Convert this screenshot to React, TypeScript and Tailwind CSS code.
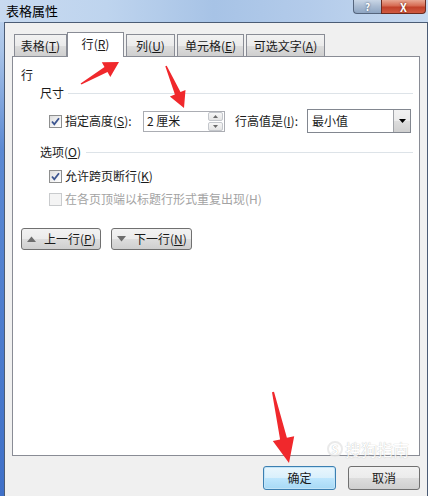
import React from "react";

function arrowPoints(x1: number, y1: number, x2: number, y2: number, headL: number, headW: number, neckW: number, tailW: number) {
  const dx = x2 - x1;
  const dy = y2 - y1;
  const len = Math.hypot(dx, dy);
  const ux = dx / len;
  const uy = dy / len;
  const nx = -uy;
  const ny = ux;
  const bx = x2 - ux * headL;
  const by = y2 - uy * headL;
  const p = (x: number, y: number) => `${x.toFixed(1)},${y.toFixed(1)}`;
  return [
    p(x1 + (nx * tailW) / 2, y1 + (ny * tailW) / 2),
    p(bx + (nx * neckW) / 2, by + (ny * neckW) / 2),
    p(bx + (nx * headW) / 2, by + (ny * headW) / 2),
    p(x2, y2),
    p(bx - (nx * headW) / 2, by - (ny * headW) / 2),
    p(bx - (nx * neckW) / 2, by - (ny * neckW) / 2),
    p(x1 - (nx * tailW) / 2, y1 - (ny * tailW) / 2),
  ].join(" ");
}

function CheckBox({ checked, disabled }: { checked?: boolean; disabled?: boolean }) {
  return (
    <div
      className={
        disabled
          ? "w-[13px] h-[13px] border border-[#c9cbcd] bg-[#f4f4f4] shrink-0"
          : "w-[13px] h-[13px] border border-[#8e8f8f] bg-[linear-gradient(135deg,#dcdcdc_0%,#f4f4f4_60%,#ffffff_100%)] shrink-0 flex items-center justify-center"
      }
    >
      {checked && (
        <svg width="11" height="11" viewBox="0 0 11 11">
          <path d="M2 5.5 L4.3 8.3 L9 2.2" fill="none" stroke="#3c5590" strokeWidth="1.8" />
        </svg>
      )}
    </div>
  );
}

function Tab({ label, k, w, selected }: { label: string; k: string; w: string; selected?: boolean }) {
  return (
    <div
      className={
        selected
          ? `${w} h-[25px] -mb-px z-10 relative bg-white border border-b-0 border-[#898c95] flex items-center justify-center pb-[2px]`
          : `${w} h-[22px] bg-[linear-gradient(180deg,#f2f2f2_0%,#ebebeb_50%,#dddddd_51%,#cfcfcf_100%)] border border-b-0 border-[#898c95] flex items-center justify-center`
      }
    >
      <span className="whitespace-nowrap">
        {label}(<u>{k}</u>)
      </span>
    </div>
  );
}

function NavButton({ label, k, up, w }: { label: string; k: string; up?: boolean; w: string }) {
  return (
    <div
      className={`${w} h-[22px] rounded-[3px] border border-[#707070] bg-[linear-gradient(180deg,#f2f2f2_0%,#ebebeb_50%,#dddddd_51%,#cfcfcf_100%)] flex items-center pl-[5px]`}
    >
      <svg width="9" height="6" viewBox="0 0 9 6" className="mr-[8px]">
        {up ? <path d="M0 6 L4.5 0.5 L9 6 Z" fill="#6d6d6d" /> : <path d="M0 0 L4.5 5.5 L9 0 Z" fill="#6d6d6d" />}
      </svg>
      <span className="whitespace-nowrap">
        {label}(<u>{k}</u>)
      </span>
    </div>
  );
}

export default function App() {
  return (
    <div className="relative w-[428px] h-[496px] overflow-hidden bg-[linear-gradient(180deg,#c4d7ef_0%,#a9c4e8_10%,#5b89d3_30%,#3f70c8_100%)] font-['Noto_Sans_CJK_SC','Noto_Sans',sans-serif] text-[12px] leading-[16px] text-[#1a1a1a]">
      {/* Title bar */}
      <div className="h-[22px] flex items-start bg-[linear-gradient(90deg,#c8daf0_0%,#bed4ee_25%,#a7c3e6_50%,#b3cbea_72%,#c6d9f0_100%)]">
        <div className="pl-[6px] pt-[3px] flex-1 text-[13px] leading-[16px] text-black">表格属性</div>
        <div className="w-[28px] h-[14px] rounded-bl-[4px] border border-t-0 border-r-0 border-[#55657d] bg-[linear-gradient(180deg,#c9d6e6_0%,#a9bbd2_50%,#8ea5c2_100%)] flex items-center justify-center">
          <span className="text-white text-[10px] font-bold leading-[12px] [text-shadow:0_0_2px_#3a4a60]">?</span>
        </div>
        <div className="w-[45px] h-[14px] rounded-br-[4px] border border-t-0 border-[#6b2b20] bg-[linear-gradient(180deg,#e8a894_0%,#d66a52_45%,#c1412a_55%,#d05a42_100%)] flex items-center justify-center">
          <span className="text-white text-[11px] font-bold leading-[12px] [text-shadow:0_0_2px_#5a1a10]">X</span>
        </div>
        <div className="w-[2px]" />
      </div>

      {/* Body */}
      <div className="ml-[4px] w-[424px] h-[474px] border-l border-t border-r border-[#4b5c75] bg-[#f0f0f0] pt-[9px] px-[7px]">
        {/* Tabs */}
        <div className="h-[24px] flex items-end pl-[2px]">
          <Tab label="表格" k="T" w="w-[53px]" />
          <Tab label="行" k="R" w="w-[57px]" selected />
          <div className="w-[2px]" />
          <Tab label="列" k="U" w="w-[49px]" />
          <div className="w-[2px]" />
          <Tab label="单元格" k="E" w="w-[67px]" />
          <div className="w-[2px]" />
          <Tab label="可选文字" k="A" w="w-[79px]" />
        </div>

        {/* Panel */}
        <div className="w-[408px] h-[400px] bg-white border border-[#898c95] flex flex-col">
          <div className="mt-[10px] ml-[8px]">行</div>

          <div className="mt-[2px] flex items-center pl-[27px] pr-[6px]">
            <span>尺寸</span>
            <div className="flex-1 h-px bg-[#dde3e8] ml-[4px]" />
          </div>

          <div className="mt-[8px] h-[24px] flex items-center pl-[36px]">
            <CheckBox checked />
            <span className="ml-[3px] w-[78px] whitespace-nowrap">
              指定高度(<u>S</u>):
            </span>
            <div className="w-[82px] h-[21px] border border-[#abadb3] bg-white flex items-center pl-[3px]">
              <span className="flex-1 whitespace-pre">2 厘米</span>
              <div className="w-[15px] h-[19px] flex flex-col gap-px mr-px">
                <div className="h-[9px] border border-[#c4c7cc] rounded-[2px] bg-[linear-gradient(180deg,#f7f7f7,#e4e4e4)] flex items-center justify-center">
                  <svg width="5" height="3" viewBox="0 0 5 3">
                    <path d="M0 3 L2.5 0 L5 3 Z" fill="#6a6a6a" />
                  </svg>
                </div>
                <div className="h-[9px] border border-[#c4c7cc] rounded-[2px] bg-[linear-gradient(180deg,#f7f7f7,#e4e4e4)] flex items-center justify-center">
                  <svg width="5" height="3" viewBox="0 0 5 3">
                    <path d="M0 0 L2.5 3 L5 0 Z" fill="#6a6a6a" />
                  </svg>
                </div>
              </div>
            </div>
            <span className="ml-[10px] w-[72px] whitespace-nowrap">
              行高值是(<u>I</u>):
            </span>
            <div className="w-[104px] h-[24px] border border-[#828790] bg-white flex items-center">
              <span className="flex-1 pl-[4px]">最小值</span>
              <div className="w-[17px] h-[22px] border-l border-[#a0a3a8] bg-[linear-gradient(180deg,#f2f2f2_0%,#ebebeb_50%,#dddddd_51%,#cfcfcf_100%)] flex items-center justify-center">
                <svg width="7" height="4" viewBox="0 0 7 4">
                  <path d="M0 0 L3.5 4 L7 0 Z" fill="#000" />
                </svg>
              </div>
            </div>
          </div>

          <div className="mt-[11px] flex items-center pl-[27px] pr-[6px]">
            <span className="whitespace-nowrap">
              选项(<u>O</u>)
            </span>
            <div className="flex-1 h-px bg-[#dde3e8] ml-[5px]" />
          </div>

          <div className="mt-[8px] flex items-center pl-[36px]">
            <CheckBox checked />
            <span className="ml-[3px] whitespace-nowrap">
              允许跨页断行(<u>K</u>)
            </span>
          </div>

          <div className="mt-[7px] flex items-center pl-[36px]">
            <CheckBox disabled />
            <span className="ml-[3px] whitespace-nowrap text-[#a3a3a3]">在各页顶端以标题行形式重复出现(H)</span>
          </div>

          <div className="mt-[21px] flex items-center pl-[8px] gap-[10px]">
            <NavButton label="上一行" k="P" up w="w-[80px]" />
            <NavButton label="下一行" k="N" w="w-[81px]" />
          </div>
        </div>

        {/* Bottom buttons */}
        <div className="mt-[10px] flex justify-end gap-[12px]">
          <div className="w-[73px] h-[24px] rounded-[3px] border border-[#3c7fb1] bg-[linear-gradient(180deg,#eaf6fd_0%,#d9f0fc_50%,#bee6fd_51%,#a7d9f5_100%)] shadow-[inset_0_0_0_1px_#c3e4f7] flex items-center justify-center">
            确定
          </div>
          <div className="w-[72px] h-[24px] rounded-[3px] border border-[#707070] bg-[linear-gradient(180deg,#f2f2f2_0%,#ebebeb_50%,#dddddd_51%,#cfcfcf_100%)] flex items-center justify-center">
            取消
          </div>
        </div>
      </div>

      {/* Watermark */}
      <div className="absolute left-[327px] top-[440px] flex items-center gap-[2px] opacity-80 pointer-events-none">
        <div className="w-[16px] h-[16px] rounded-full border-2 border-[#e6e6e6] flex items-center justify-center text-[11px] font-bold leading-none text-white [text-shadow:0_0_1px_#999]">
          S
        </div>
        <span className="text-[16px] leading-[18px] text-white [text-shadow:0_0_1px_#9a9a9a]">搜狗指南</span>
      </div>

      {/* Red annotation arrows */}
      <svg className="absolute left-0 top-0 pointer-events-none" width="428" height="496" viewBox="0 0 428 496">
        <polygon points={arrowPoints(81, 84, 119, 62, 15, 17, 6, 1.5)} fill="#f0282c" />
        <polygon points={arrowPoints(166, 66, 184, 108, 16, 17, 6, 1.5)} fill="#f0282c" />
        <polygon points={arrowPoints(273, 392, 289, 463, 25, 22, 7, 2)} fill="#f0282c" />
      </svg>
    </div>
  );
}
